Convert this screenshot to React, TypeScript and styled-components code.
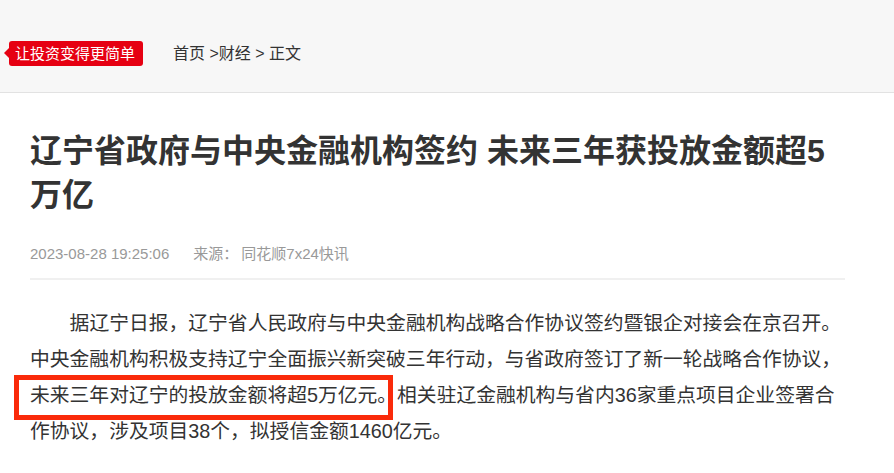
import styled, { createGlobalStyle } from "styled-components";

const GlobalStyle = createGlobalStyle`
  body {
    margin: 0;
    background: #fff;
    font-family: "Liberation Sans", "Noto Sans CJK SC", sans-serif;
    color: #333;
  }
`;

const TopBar = styled.header`
  height: 93px;
  box-sizing: border-box;
  padding: 14px 0 0 9px;
  background: #f7f7f7;
  border-bottom: 1px solid #e2e2e2;
  display: flex;
  align-items: center;
`;

const Slogan = styled.div`
  position: relative;
  height: 25px;
  line-height: 25px;
  padding: 0 8px 0 6px;
  background: #e60012;
  color: #fff;
  font-size: 15px;
  border-radius: 3px;

  &::before {
    content: "";
    position: absolute;
    left: -5px;
    top: 50%;
    margin-top: -5px;
    border-right: 5px solid #e60012;
    border-top: 5px solid transparent;
    border-bottom: 5px solid transparent;
  }
`;

const Crumbs = styled.nav`
  margin-left: 30px;
  margin-top: -3px;
  font-size: 16px;
  color: #333;
  white-space: pre;
`;

const Article = styled.article`
  width: 815px;
  padding-left: 30px;
`;

const Title = styled.h1`
  margin: 36px 0 0;
  font-size: 32px;
  line-height: 44px;
  font-weight: bold;
  color: #333;
`;

const Meta = styled.div`
  margin-top: 27px;
  height: 20px;
  line-height: 20px;
  font-size: 15px;
  color: #999;
  padding-bottom: 14px;
  border-bottom: 2px solid #f0f0f0;
`;

const MetaItem = styled.span<{ $gap?: number }>`
  margin-right: ${(p) => p.$gap ?? 0}px;
`;

const Paragraph = styled.p`
  margin: 25px 0 0;
  font-size: 19.8px;
  line-height: 36px;
  text-indent: 2em;
  color: #333;
`;

const Marked = styled.span`
  position: relative;

  &::after {
    content: "";
    position: absolute;
    left: -16px;
    right: 4px;
    top: -9px;
    bottom: -14px;
    border: 5px solid #fa2a0a;
    pointer-events: none;
  }
`;

export default function App() {
  return (
    <>
      <GlobalStyle />
      <TopBar>
        <Slogan>让投资变得更简单</Slogan>
        <Crumbs>首页 &gt;财经 &gt; 正文</Crumbs>
      </TopBar>
      <Article>
        <Title>辽宁省政府与中央金融机构签约 未来三年获投放金额超5万亿</Title>
        <Meta>
          <MetaItem $gap={24}>2023-08-28 19:25:06</MetaItem>
          <MetaItem $gap={3}>来源：</MetaItem>
          <MetaItem>同花顺7x24快讯</MetaItem>
        </Meta>
        <Paragraph>
          据辽宁日报，辽宁省人民政府与中央金融机构战略合作协议签约暨银企对接会在京召开。中央金融机构积极支持辽宁全面振兴新突破三年行动，与省政府签订了新一轮战略合作协议，
          <Marked>未来三年对辽宁的投放金额将超5万亿元。</Marked>
          相关驻辽金融机构与省内36家重点项目企业签署合作协议，涉及项目38个，拟授信金额1460亿元。
        </Paragraph>
      </Article>
    </>
  );
}
